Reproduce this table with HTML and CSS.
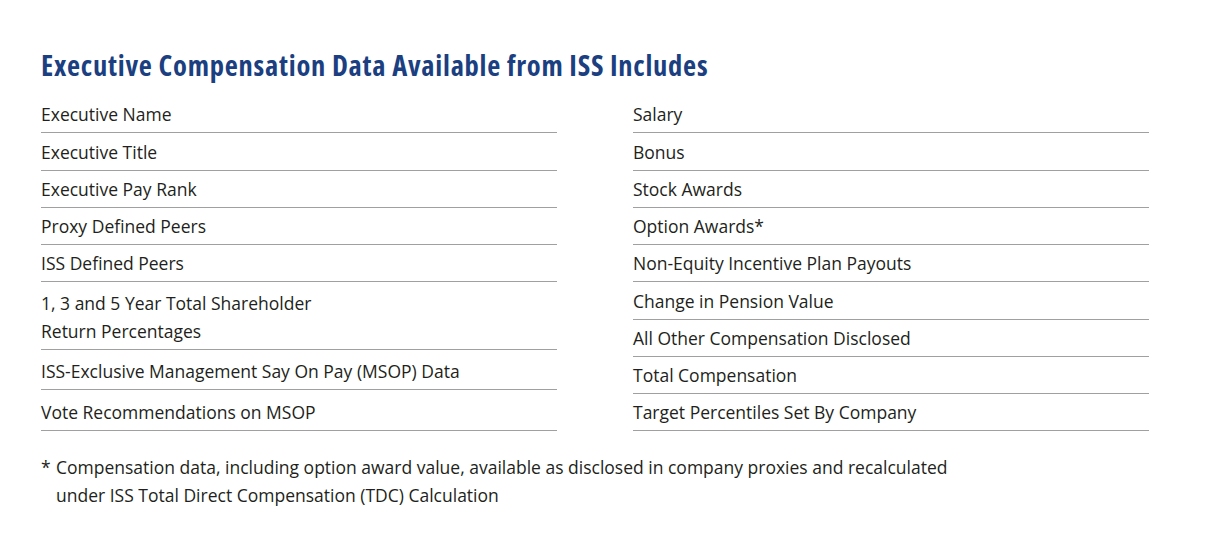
FILE: index.html
```html
<!DOCTYPE html>
<html>
<head>
<meta charset="utf-8">
<link rel="stylesheet" href="styles.css">
</head>
<body>
<div class="page">
  <h1 class="title">Executive Compensation Data Available from ISS Includes</h1>
  <div class="cols">
    <ul class="list">
      <li class="row">Executive Name</li>
      <li class="row">Executive Title</li>
      <li class="row">Executive Pay Rank</li>
      <li class="row">Proxy Defined Peers</li>
      <li class="row">ISS Defined Peers</li>
      <li class="row tall">1, 3 and 5 Year Total Shareholder<br>Return Percentages</li>
      <li class="row tall">ISS-Exclusive Management Say On Pay (MSOP) Data</li>
      <li class="row tall">Vote Recommendations on MSOP</li>
    </ul>
    <ul class="list">
      <li class="row">Salary</li>
      <li class="row">Bonus</li>
      <li class="row">Stock Awards</li>
      <li class="row">Option Awards*</li>
      <li class="row">Non-Equity Incentive Plan Payouts</li>
      <li class="row">Change in Pension Value</li>
      <li class="row">All Other Compensation Disclosed</li>
      <li class="row">Total Compensation</li>
      <li class="row">Target Percentiles Set By Company</li>
    </ul>
  </div>
  <p class="note"><span class="star">*</span><span class="note-text">Compensation data, including option award value, available as disclosed in company proxies and recalculated<br>under ISS Total Direct Compensation (TDC) Calculation</span></p>
</div>
</body>
</html>
```

FILE: styles.css
```css
html, body {
  margin: 0;
  padding: 0;
  background: #ffffff;
}
.page {
  width: 1207px;
  height: 536px;
  box-sizing: border-box;
  padding: 48px 0 0 41px;
  font-family: "Open Sans", "Liberation Sans", sans-serif;
  color: #231f20;
}
.title {
  margin: 0;
  font-size: 28.5px;
  line-height: 34px;
  font-weight: 700;
  color: #1b3f80;
  font-stretch: condensed;
  letter-spacing: 0.75px;
}
.cols {
  display: grid;
  grid-template-columns: 516px 516px;
  column-gap: 76px;
  margin-top: 14px;
}
.list {
  list-style: none;
  margin: 0;
  padding: 0;
}
.row {
  font-size: 17.5px;
  line-height: 28px;
  padding: 4.25px 0 4px 0;
  border-bottom: 1px solid #a0a0a0;
}
.row.tall {
  padding-top: 7px;
}
.row.tall:last-child {
  padding-top: 8px;
}
.note {
  display: flex;
  margin: 22px 0 0 0;
  font-size: 17.5px;
  line-height: 28px;
}
.star {
  width: 15px;
  flex: none;
}
```
